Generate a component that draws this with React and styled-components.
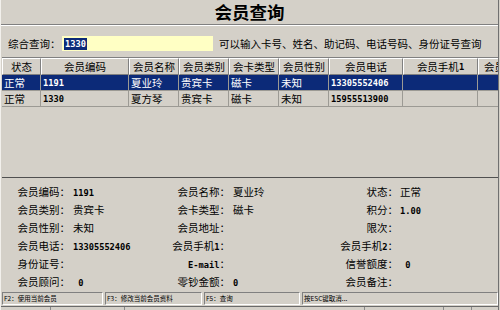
import React from "react";
import styled, { createGlobalStyle } from "styled-components";

const GlobalStyle = createGlobalStyle`
  html, body { margin: 0; padding: 0; background: #d4d0c8; }
  body {
    font-family: "Noto Sans CJK SC", "Noto Sans", sans-serif;
    font-size: 10.5px;
    color: #000;
  }
`;

const Window = styled.div`
  width: 499px;
  height: 310px;
  box-sizing: border-box;
  overflow: hidden;
  display: flex;
  flex-direction: column;
  background: #d4d0c8;
  border-left: 1px solid #f2f0ec;
  border-right: 1px solid #707070;
`;

const TitleBar = styled.div`
  height: 24px;
  flex: none;
  display: flex;
  align-items: center;
  justify-content: center;
  border-bottom: 1px solid #808080;
  box-shadow: 0 1px 0 #ffffff;
  font-size: 17.5px;
  font-weight: 700;
  line-height: 1;
`;

const SearchRow = styled.div`
  height: 32px;
  flex: none;
  box-sizing: border-box;
  padding: 5px 0 0 7px;
  display: flex;
  align-items: center;
  white-space: nowrap;
`;

const SearchLabel = styled.span`
  width: 54px;
  flex: none;
`;

const SearchInput = styled.div`
  width: 151px;
  height: 15px;
  flex: none;
  box-sizing: border-box;
  padding-left: 2px;
  display: flex;
  align-items: center;
  background: #ffffc4;
`;

const Num = styled.span`
  font-family: "DejaVu Sans Mono", "Liberation Mono", monospace;
  font-weight: 700;
  font-size: 8.7px;
`;

const SelectedText = styled(Num)`
  background: #0c2a78;
  color: #ffffff;
  line-height: 12px;
  padding: 0 1px;
`;

const Hint = styled.span`
  margin-left: 6px;
`;

const Table = styled.div`
  height: 121px;
  flex: none;
  box-sizing: border-box;
  margin-left: 1px;
  border-top: 1px solid #808080;
  border-bottom: 1px solid #505050;
  overflow: hidden;
`;

const COLS = "39px 88px 50px 50px 50px 50px 74px 75px 60px";

const GridRow = styled.div`
  display: grid;
  grid-template-columns: ${COLS};
  height: ${(p) => (p.$header ? 17 : 16)}px;
  background: ${(p) => (p.$selected ? "#0c2a78" : "transparent")};
  color: ${(p) => (p.$selected ? "#ffffff" : "#000000")};
  white-space: nowrap;
`;

const HeadCell = styled.div`
  box-sizing: border-box;
  border-top: 1px solid #ffffff;
  border-left: 1px solid #ffffff;
  border-right: 1px solid #808080;
  border-bottom: 1px solid #808080;
  display: flex;
  align-items: center;
  justify-content: center;
  overflow: hidden;
`;

const Cell = styled.div`
  box-sizing: border-box;
  border-right: 1px solid #9c9a94;
  border-bottom: 1px solid #9c9a94;
  padding-left: 2px;
  display: flex;
  align-items: center;
  overflow: hidden;
`;

const Details = styled.div`
  flex: none;
  display: grid;
  grid-template-columns: 69px 90px 70px 105px 63px 1fr;
  grid-auto-rows: 18px;
  align-items: center;
  padding-top: 4px;
  white-space: nowrap;
`;

const Label = styled.div`
  text-align: right;
`;

const Value = styled.div`
  padding-left: ${(p) => p.$pad ?? 3}px;
`;

const StatusBar = styled.div`
  flex: none;
  display: flex;
  gap: 2px;
  height: 13px;
  margin-top: 2px;
  padding-left: 1px;
`;

const StatusPanel = styled.div`
  box-sizing: border-box;
  width: ${(p) => (p.$w ? `${p.$w}px` : "auto")};
  flex: ${(p) => (p.$w ? "none" : "1")};
  border-top: 1px solid #808080;
  border-left: 1px solid #808080;
  border-bottom: 1px solid #ffffff;
  border-right: 1px solid #ffffff;
  font-size: 6.5px;
  line-height: 11px;
  padding-left: 1px;
  white-space: nowrap;
  overflow: hidden;
`;

const BottomStrip = styled.div`
  flex: 1;
  display: flex;
  margin-top: 1px;
  border-top: 1px solid #6a6a6a;
`;

const StripCell = styled.div`
  width: ${(p) => p.$w}px;
  flex: none;
  border-right: 1px solid #8a8a8a;
`;

const columns = [
  "状态",
  "会员编码",
  "会员名称",
  "会员类别",
  "会卡类型",
  "会员性别",
  "会员电话",
  <>会员手机<Num>1</Num></>,
  "会员手机2",
];

const rows = [
  { st: "正常", code: "1191", name: "夏业玲", cat: "贵宾卡", card: "磁卡", sex: "未知", tel: "13305552406", selected: true },
  { st: "正常", code: "1330", name: "夏方琴", cat: "贵宾卡", card: "磁卡", sex: "未知", tel: "15955513900" },
];

const details = [
  [["会员编码：", <Num>1191</Num>], ["会员名称：", "夏业玲"], ["状态：", "正常"]],
  [["会员类别：", "贵宾卡"], ["会卡类型：", "磁卡"], ["积分：", <Num>1.00</Num>]],
  [["会员性别：", "未知"], ["会员地址：", ""], ["限次：", ""]],
  [["会员电话：", <Num>13305552406</Num>], [<>会员手机<Num>1</Num>：</>, ""], [<>会员手机<Num>2</Num>：</>, ""]],
  [["身份证号：", ""], [<><Num>E-mail</Num>：</>, ""], ["信誉额度：", <Num>&nbsp;0</Num>]],
  [["会员顾问：", <Num>&nbsp;0</Num>], ["零钞金额：", <Num>0</Num>], ["会员备注：", ""]],
];

export default function App() {
  return (
    <>
      <GlobalStyle />
      <Window>
        <TitleBar>会员查询</TitleBar>
        <SearchRow>
          <SearchLabel>综合查询：</SearchLabel>
          <SearchInput>
            <SelectedText>1330</SelectedText>
          </SearchInput>
          <Hint>可以输入卡号、姓名、助记码、电话号码、身份证号查询</Hint>
        </SearchRow>
        <Table>
          <GridRow $header>
            {columns.map((c, i) => (
              <HeadCell key={i}>{c}</HeadCell>
            ))}
          </GridRow>
          {rows.map((r, i) => (
            <GridRow key={i} $selected={r.selected}>
              <Cell>{r.st}</Cell>
              <Cell><Num>{r.code}</Num></Cell>
              <Cell>{r.name}</Cell>
              <Cell>{r.cat}</Cell>
              <Cell>{r.card}</Cell>
              <Cell>{r.sex}</Cell>
              <Cell><Num>{r.tel}</Num></Cell>
              <Cell />
              <Cell />
            </GridRow>
          ))}
        </Table>
        <Details>
          {details.map((row, ri) =>
            row.map(([l, v], ci) => (
              <React.Fragment key={`${ri}-${ci}`}>
                <Label>{l}</Label>
                <Value $pad={ci === 2 ? 2 : 3}>{v}</Value>
              </React.Fragment>
            ))
          )}
        </Details>
        <StatusBar>
          <StatusPanel $w={101}>F2：使用当前会员</StatusPanel>
          <StatusPanel $w={97}>F3：修改当前会员资料</StatusPanel>
          <StatusPanel $w={96}>F5：查询</StatusPanel>
          <StatusPanel>按ESC键取消...</StatusPanel>
        </StatusBar>
        <BottomStrip>
          <StripCell $w={49} />
          <StripCell $w={73} />
          <StripCell $w={239} />
          <StripCell $w={78} />
          <StripCell $w={27} />
        </BottomStrip>
      </Window>
    </>
  );
}
